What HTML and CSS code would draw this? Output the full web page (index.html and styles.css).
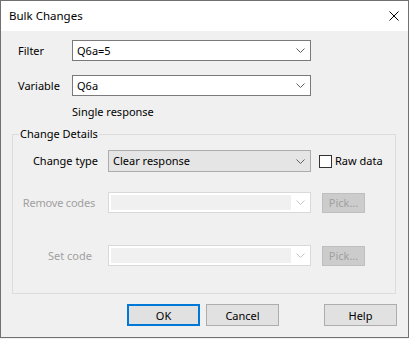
FILE: index.html
```html
<!DOCTYPE html>
<html lang="en">

<head>
    <meta charset="UTF-8">
    <meta name="viewport" content="width=device-width, initial-scale=1.0">
    <title>Bulk Changes</title>
    <link rel="stylesheet" href="styles.css">
</head>

<body>
    <div class="window">
        <div class="titlebar">
            <span class="title">Bulk Changes</span>
            <svg class="close" width="10" height="10" viewBox="0 0 10 10">
                <path d="M0.5 0.5L9.5 9.5M9.5 0.5L0.5 9.5" stroke="#000" stroke-width="1" fill="none" />
            </svg>
        </div>

        <div class="content">
            <div class="field-row">
                <label class="field-label">Filter</label>
                <div class="combo">
                    <span class="combo-text">Q6a=5</span>
                    <svg class="chevron" width="9" height="5" viewBox="0 0 9 5">
                        <path d="M0.5 0.5L4.5 4.5L8.5 0.5" stroke="#606060" fill="none" />
                    </svg>
                </div>
            </div>

            <div class="field-row">
                <label class="field-label">Variable</label>
                <div class="combo">
                    <span class="combo-text">Q6a</span>
                    <svg class="chevron" width="9" height="5" viewBox="0 0 9 5">
                        <path d="M0.5 0.5L4.5 4.5L8.5 0.5" stroke="#606060" fill="none" />
                    </svg>
                </div>
            </div>

            <div class="note">Single response</div>

            <fieldset class="group">
                <legend>Change Details</legend>

                <div class="detail-row first">
                    <label class="detail-label">Change type</label>
                    <div class="combo combo-button">
                        <span class="combo-text">Clear response</span>
                        <svg class="chevron" width="9" height="5" viewBox="0 0 9 5">
                            <path d="M0.5 0.5L4.5 4.5L8.5 0.5" stroke="#606060" fill="none" />
                        </svg>
                    </div>
                    <div class="check">
                        <span class="check-box"></span>
                        <span>Raw data</span>
                    </div>
                </div>

                <div class="detail-row second">
                    <label class="detail-label disabled remove">Remove codes</label>
                    <div class="combo combo-disabled">
                        <span class="combo-fill"></span>
                        <svg class="chevron" width="9" height="5" viewBox="0 0 9 5">
                            <path d="M0.5 0.5L4.5 4.5L8.5 0.5" stroke="#c4c4c4" fill="none" />
                        </svg>
                    </div>
                    <button class="pick" disabled>Pick...</button>
                </div>

                <div class="detail-row third">
                    <label class="detail-label disabled setcode">Set code</label>
                    <div class="combo combo-disabled">
                        <span class="combo-fill"></span>
                        <svg class="chevron" width="9" height="5" viewBox="0 0 9 5">
                            <path d="M0.5 0.5L4.5 4.5L8.5 0.5" stroke="#c4c4c4" fill="none" />
                        </svg>
                    </div>
                    <button class="pick" disabled>Pick...</button>
                </div>
            </fieldset>

            <div class="buttons">
                <button class="btn btn-default">OK</button>
                <button class="btn">Cancel</button>
                <button class="btn btn-help">Help</button>
            </div>
        </div>
    </div>
</body>

</html>
```

FILE: styles.css
```css
body {
    margin: 0;
    background-color: #f0f0f0;
    font-family: "Noto Sans", "Liberation Sans", sans-serif;
    font-size: 11px;
    color: #000;
    white-space: nowrap;
}

.window {
    width: 409px;
    height: 338px;
    box-sizing: border-box;
    border: 1px solid #707070;
    background: #f0f0f0;
}

.titlebar {
    height: 30px;
    background: #fff;
    display: flex;
    align-items: center;
    justify-content: space-between;
    padding: 0 9px 0 8px;
}

.title {
    line-height: 16px;
    font-size: 11.5px;
}

.content {
    padding: 9px 12px 0 11px;
}

.field-row {
    display: flex;
    align-items: center;
    padding-left: 6px;
    margin-bottom: 14px;
}

.field-label {
    width: 54px;
    flex-shrink: 0;
    line-height: 16px;
}

.combo {
    width: 239px;
    height: 21px;
    flex-shrink: 0;
    box-sizing: border-box;
    border: 1px solid #7a7a7a;
    background: #fff;
    display: flex;
    align-items: center;
    justify-content: space-between;
    padding: 0 5px 0 4px;
}

.combo-text {
    line-height: 16px;
}

.note {
    padding-left: 60px;
    line-height: 16px;
    margin-top: -6px;
}

.group {
    margin: 6px 0 0 0;
    padding: 8px 12px 27px 6px;
    border: 1px solid #dcdcdc;
}

.group legend {
    padding: 0 1px;
    line-height: 16px;
}

.detail-row {
    display: flex;
    align-items: center;
}

.detail-row.second {
    margin-top: 20px;
}

.detail-row.third {
    margin-top: 32px;
}

.detail-label {
    width: 79px;
    flex-shrink: 0;
    text-align: right;
    line-height: 16px;
    box-sizing: border-box;
    margin-right: 10px;
}

.detail-label.remove {
    padding-right: 3px;
    letter-spacing: -0.2px;
}

.detail-label.setcode {
    padding-right: 6px;
}

.disabled {
    color: #a0a0a0;
}

.detail-row .combo {
    width: 203px;
}

.combo-button {
    background: #e5e5e5;
    border-color: #acacac;
    height: 22px;
}

.combo-disabled {
    border-color: #d9d9d9;
    padding: 2px 5px 2px 2px;
    align-items: stretch;
}

.combo-fill {
    width: 180px;
    background: #f0f0f0;
}

.combo-disabled .chevron {
    align-self: center;
}

.check {
    display: flex;
    align-items: center;
    margin-left: 8px;
    gap: 3px;
    line-height: 16px;
}

.check-box {
    width: 13px;
    height: 13px;
    flex-shrink: 0;
    box-sizing: border-box;
    border: 1px solid #333;
    background: #fff;
}

.pick {
    margin-left: 11px;
    width: 43px;
    height: 20px;
    flex-shrink: 0;
    padding: 0;
    font-family: inherit;
    font-size: 11px;
    color: #a0a0a0;
    background: #cccccc;
    border: 1px solid #bfbfbf;
    border-radius: 0;
}

.buttons {
    display: flex;
    margin-top: 10px;
    padding-left: 115px;
}

.btn {
    width: 73px;
    height: 22px;
    flex-shrink: 0;
    padding: 0;
    margin-right: 6px;
    font-family: inherit;
    font-size: 11px;
    color: #000;
    background: #e1e1e1;
    border: 1px solid #adadad;
    border-radius: 0;
}

.btn-default {
    border: 2px solid #0078d7;
}

.btn-help {
    margin-left: 39px;
    margin-right: 0;
}
```
